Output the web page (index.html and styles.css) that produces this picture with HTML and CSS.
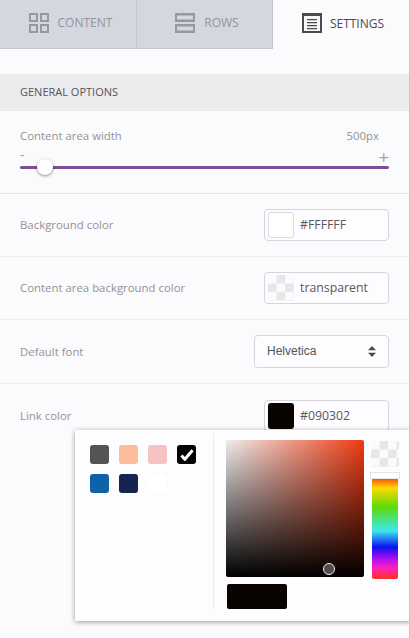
FILE: index.html
```html
<!DOCTYPE html>
<html lang="en">
<head>
    <meta charset="UTF-8">
    <meta name="viewport" content="width=device-width, initial-scale=1.0">
    <title>Settings</title>
    <link rel="stylesheet" href="styles.css">
</head>
<body>
    <div class="panel">
        <div class="tabs">
            <div class="tab">
                <svg class="tab-icon" viewBox="0 0 20 20"><path fill-rule="evenodd" d="M0 0h9v9H0zM2 2v5h5V2zM11 0h9v9h-9zM13 2v5h5V2zM0 11h9v9H0zM2 13v5h5v-5zM11 11h9v9h-9zM13 13v5h5v-5z"/></svg>
                <span>CONTENT</span>
            </div>
            <div class="tab">
                <svg class="tab-icon" viewBox="0 0 20 20"><path fill-rule="evenodd" d="M0 0h20v9H0zM2 2.500v4h16v-4zM0 11h20v9H0zM2 13.500v4h16v-4z"/></svg>
                <span>ROWS</span>
            </div>
            <div class="tab active">
                <svg class="tab-icon" viewBox="0 0 20 20"><path fill-rule="evenodd" d="M0 0h20v20H0zM2 3v15h16V3zM5 6h10v1.300H5zM5 9h10v1.300H5zM5 12h10v1.300H5zM5 15h10v1.300H5z"/></svg>
                <span>SETTINGS</span>
            </div>
        </div>

        <h2 class="section-title">GENERAL OPTIONS</h2>

        <div class="width-row">
            <div class="width-labels">
                <span>Content area width</span>
                <span>500px</span>
            </div>
            <div class="width-signs">
                <span>-</span>
                <span class="plus">+</span>
            </div>
            <div class="slider">
                <div class="slider-thumb"></div>
            </div>
        </div>

        <div class="row row-short">
            <span class="row-label">Background color</span>
            <div class="color-input">
                <span class="swatch swatch-white"></span>
                <span class="color-value">#FFFFFF</span>
            </div>
        </div>
        <div class="row row-short">
            <span class="row-label">Content area background color</span>
            <div class="color-input">
                <span class="swatch checker"></span>
                <span class="color-value">transparent</span>
            </div>
        </div>
        <div class="row">
            <span class="row-label">Default font</span>
            <div class="select">
                <span>Helvetica</span>
                <svg class="select-arrows" viewBox="0 0 8 11"><path d="M4 0l4 4.200H0zM4 11L0 6.800h8z"/></svg>
            </div>
        </div>
        <div class="row row-last">
            <span class="row-label">Link color</span>
            <div class="color-input">
                <span class="swatch swatch-link"></span>
                <span class="color-value">#090302</span>
            </div>
        </div>

        <div class="picker">
            <div class="presets">
                <span class="preset" style="background: #545355"></span>
                <span class="preset" style="background: #fdbd9b"></span>
                <span class="preset" style="background: #f6c3c5"></span>
                <span class="preset preset-selected" style="background: #050204">
                    <svg viewBox="0 0 16 14"><path d="M1.500 7.500l4 4.500L14.500 1.500" fill="none" stroke="#fff" stroke-width="3.500"/></svg>
                </span>
                <span class="preset" style="background: #0f62a8"></span>
                <span class="preset" style="background: #17244f"></span>
                <span class="preset preset-white" style="background: #ffffff"></span>
            </div>
            <div class="picker-main">
                <div class="picker-top">
                    <div class="saturation">
                        <div class="saturation-cursor"></div>
                    </div>
                    <div class="sliders">
                        <div class="alpha checker"></div>
                        <div class="hue-handle"></div>
                        <div class="hue"></div>
                    </div>
                </div>
                <div class="preview"></div>
            </div>
        </div>
    </div>
</body>
</html>
```

FILE: styles.css
```css
* {
    box-sizing: border-box;
}
body {
    margin: 0;
    background: #fbfafc;
    font-family: 'Open Sans', sans-serif;
    overflow: hidden;
}
.panel {
    position: relative;
    width: 410px;
    height: 638px;
    border-right: 1px solid #c9c9cb;
    overflow: hidden;
}
.tabs {
    display: flex;
    height: 49px;
    margin-right: -1px;
}
.tab {
    flex: 0 0 137px;
    display: flex;
    align-items: center;
    justify-content: center;
    gap: 9px;
    padding: 0 0 3px 5px;
    background: #d4d7df;
    border-right: 1px solid #c3c6cf;
    border-bottom: 1px solid #c3c6cf;
    color: #94959a;
    font-size: 12px;
    font-weight: 500;
}
.tab:nth-child(2) {
    flex-basis: 136px;
}
.tab-icon {
    width: 20px;
    height: 20px;
    fill: #97989d;
}
.tab.active {
    gap: 8px;
    padding-left: 3px;
    background: #fbfafc;
    border: none;
    color: #4b4b4d;
}
.tab.active .tab-icon {
    fill: #4b4b4d;
}
.section-title {
    margin: 25px 0 0;
    height: 37px;
    padding-left: 20px;
    background: #ebebed;
    color: #555557;
    font-size: 11px;
    font-weight: 500;
    line-height: 36px;
}
.width-row {
    height: 83px;
    padding: 16px 20px 0;
    border-bottom: 1px solid #e2e1e6;
}
.width-labels {
    display: flex;
    justify-content: space-between;
    padding-right: 10px;
    color: #939396;
    font-size: 11.400px;
    line-height: 18px;
}
.width-signs {
    display: flex;
    justify-content: space-between;
    height: 20px;
    color: #a5a5a8;
    font-size: 14px;
    line-height: 20px;
}
.plus {
    font-size: 19px;
    font-weight: 500;
    line-height: 24px;
}
.slider {
    position: relative;
    height: 3px;
    margin-top: 1px;
    background: #7b4f93;
    border-radius: 2px;
}
.slider-thumb {
    position: absolute;
    left: 17px;
    top: -7px;
    width: 16px;
    height: 16px;
    background: #fff;
    border-radius: 50%;
    box-shadow: 0 1px 3px rgba(0, 0, 0, 0.45);
}
.row {
    display: flex;
    align-items: center;
    justify-content: space-between;
    height: 64px;
    padding: 0 20px;
    border-bottom: 1px solid #eeedf0;
}
.row-short {
    height: 63px;
}
.row-last {
    border-bottom: none;
}
.row-label {
    margin-bottom: 1px;
    color: #939396;
    font-size: 11.400px;
}
.color-input {
    display: flex;
    align-items: center;
    gap: 6px;
    width: 125px;
    height: 32px;
    padding-left: 3px;
    background: #fdfcfe;
    border: 1px solid #d6d6da;
    border-radius: 4px;
    color: #58585a;
    font-size: 12.300px;
    font-weight: 500;
}
.color-value {
    margin-bottom: 1px;
}
.swatch {
    width: 26px;
    height: 26px;
    border-radius: 3px;
}
.swatch-white {
    background: #fff;
    border: 1px solid #dcdce0;
}
.swatch-link {
    background: #090302;
}
.checker {
    background-color: #fbfafc;
    background-image:
        linear-gradient(45deg, #e6e5e8 25%, transparent 25%, transparent 75%, #e6e5e8 75%),
        linear-gradient(45deg, #e6e5e8 25%, transparent 25%, transparent 75%, #e6e5e8 75%);
    background-size: 17px 17px;
    background-position: 0 0, 8.500px 8.500px;
}
.select {
    display: flex;
    align-items: center;
    justify-content: space-between;
    width: 135px;
    height: 33px;
    padding: 0 12px 2px 12px;
    background: #fdfcfe;
    border: 1px solid #d6d6da;
    border-radius: 4px;
    color: #555557;
    font-family: 'Liberation Sans', sans-serif;
    font-size: 12px;
}
.select-arrows {
    width: 8px;
    height: 11px;
    margin-top: 2px;
    fill: #4b4b4d;
}
.picker {
    position: absolute;
    left: 75px;
    top: 430px;
    display: flex;
    width: 335px;
    height: 191px;
    background: #fdfcfe;
    box-shadow: 0 1px 5px rgba(0, 0, 0, 0.4);
}
.presets {
    display: grid;
    grid-template-columns: repeat(4, 19px);
    grid-auto-rows: 19px;
    gap: 10px;
    align-content: start;
    width: 139px;
    height: 176px;
    margin-top: 4px;
    padding: 11px 0 0 15px;
    border-right: 1px solid #ebeaee;
}
.preset {
    display: flex;
    align-items: center;
    justify-content: center;
    border-radius: 3px;
}
.preset-white {
    box-shadow: 0 0 2px rgba(0, 0, 0, 0.06);
}
.preset svg {
    width: 14px;
    height: 12px;
}
.picker-main {
    padding: 10px 0 0 12px;
}
.picker-top {
    display: flex;
    gap: 6px;
}
.saturation {
    position: relative;
    width: 138px;
    height: 137px;
    background:
        linear-gradient(to bottom, rgba(0, 0, 0, 0), #000),
        linear-gradient(to right, #eee, #f03a12);
    border-radius: 2px;
}
.saturation-cursor {
    position: absolute;
    left: 97px;
    top: 123px;
    width: 12px;
    height: 12px;
    background: #504c4e;
    border: 1px solid #eee;
    border-radius: 50%;
}
.sliders {
    display: flex;
    flex-direction: column;
    align-items: center;
    width: 30px;
}
.alpha {
    width: 28px;
    height: 26px;
    margin-top: 1px;
    border-radius: 2px;
}
.hue-handle {
    width: 30px;
    height: 7px;
    margin-top: 5px;
    background: #fff;
    border: 1px solid #e4e4e6;
}
.hue {
    width: 26px;
    height: 100px;
    background: linear-gradient(to bottom, #f65a10 0%, #ffd800 9%, #5cdc08 28%, #3be8f0 52%, #0a10f0 68%, #b010f0 80%, #ff20c0 89%, #ff3030 98%);
    border-radius: 0 0 2px 2px;
}
.preview {
    width: 60px;
    height: 25px;
    margin: 5px 0 0 1px;
    background: #090302;
    border-radius: 2px;
}
```
